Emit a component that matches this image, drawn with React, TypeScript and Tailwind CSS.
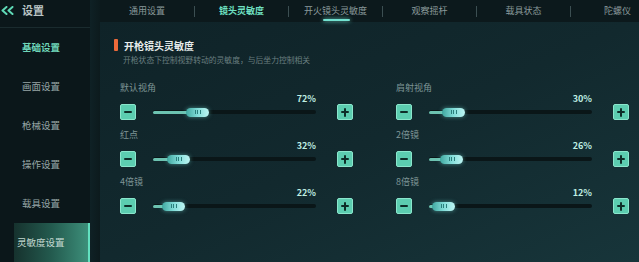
import type { CSSProperties } from "react";

const font: CSSProperties = {
  fontFamily: '"Noto Sans CJK SC", "Noto Sans", sans-serif',
};

const menu = ["基础设置", "画面设置", "枪械设置", "操作设置", "载具设置", "灵敏度设置"];
const tabs = ["通用设置", "镜头灵敏度", "开火镜头灵敏度", "观察摇杆", "载具状态", "陀螺仪"];

const sliders = [
  [
    { label: "默认视角", value: "72%", thumb: 33 },
    { label: "红点", value: "32%", thumb: 14 },
    { label: "4倍镜", value: "22%", thumb: 9 },
  ],
  [
    { label: "肩射视角", value: "30%", thumb: 13 },
    { label: "2倍镜", value: "26%", thumb: 11 },
    { label: "8倍镜", value: "12%", thumb: 3 },
  ],
];

function StepButton({ plus }: { plus?: boolean }) {
  return (
    <div className="relative grid h-4 w-4 shrink-0 place-items-center rounded-[2px] border border-[#8ae6cc] bg-[#5ccdb0]">
      <div className="absolute h-[2.5px] w-[8px] rounded-[1px] bg-[#0e2d28]" />
      {plus && <div className="absolute h-[9px] w-[2.5px] rounded-[1px] bg-[#0e2d28]" />}
    </div>
  );
}

function Slider({ label, value, thumb }: { label: string; value: string; thumb: number }) {
  return (
    <div className="flex w-[233px] flex-col">
      <div className="h-3 text-[9px] leading-3 text-[#7e9596]">{label}</div>
      <div className="h-[10px] w-[196px] text-right text-[9px] font-bold leading-[10px] text-[#bfeee2]">
        {value}
      </div>
      <div className="flex h-4 items-center">
        <StepButton />
        <div className="relative ml-[17px] flex h-[9px] w-[163px] items-center">
          <div className="h-[4px] w-full rounded-full bg-[#0a1618]" />
          <div
            className="absolute left-0 h-[3px] rounded-full bg-[#6cc2b0]"
            style={{ width: thumb + 4 }}
          />
          <div
            className="absolute top-0 flex h-[9px] w-[23px] items-center justify-center gap-[1.5px] rounded-full bg-gradient-to-r from-[#3ea8a0] via-[#80dcd8] to-[#bdf6f4] shadow-[0_0_4px_rgba(120,230,220,0.5)]"
            style={{ left: thumb }}
          >
            <div className="h-[4px] w-[1px] bg-[#2a7f7c]" />
            <div className="h-[4px] w-[1px] bg-[#2a7f7c]" />
            <div className="h-[4px] w-[1px] bg-[#2a7f7c]" />
          </div>
        </div>
        <div className="ml-[21px]">
          <StepButton plus />
        </div>
      </div>
    </div>
  );
}

export default function App() {
  return (
    <div className="flex h-[262px] w-[639px] overflow-hidden bg-[#0b171a]" style={font}>
      {/* Sidebar */}
      <aside className="flex w-[90px] shrink-0 flex-col bg-[#0b171a]">
        <div className="flex h-[28px] items-center gap-[8px] border-b border-[#1a2b2e] pl-[1px] pb-[6px]">
          <svg width="13" height="9" viewBox="0 0 13 9" fill="none" stroke="#5fd9b6" strokeWidth="2" strokeLinecap="round" strokeLinejoin="round">
            <path d="M5.5 1 L1.5 4.5 L5.5 8" />
            <path d="M11.5 1 L7.5 4.5 L11.5 8" />
          </svg>
          <span className="text-[11px] font-bold text-[#b9c4c4]">设置</span>
        </div>
        {menu.map((m, i) => {
          const active = i === menu.length - 1;
          return (
            <div
              key={m}
              className={
                active
                  ? "ml-[14px] flex h-[39px] items-center border-r-2 border-[#62e0c0] bg-gradient-to-r from-[#16322e] via-[#235a4e] to-[#3d8f7a] pl-[3px] text-[9.5px] text-[#c2d8d0]"
                  : "flex h-[39px] items-center pl-[22px] text-[9.5px] " +
                    (i === 0 ? "font-bold text-[#6fd6b8]" : "text-[#97a6a6]")
              }
            >
              {m}
            </div>
          );
        })}
      </aside>
      <div className="w-[10px] shrink-0 bg-gradient-to-r from-[#0f2125] to-[#0c1a1d]" />

      {/* Main */}
      <main className="flex flex-1 flex-col overflow-hidden">
        <div className="relative flex h-[22px] shrink-0 items-center bg-[#0c191c]">
          {tabs.map((t, i) => (
            <div key={t} className="flex h-full w-[94px] shrink-0 items-center">
              {i > 0 && <div className="h-[11px] w-px bg-[#3c4f52]" />}
              <div
                className={
                  "flex-1 text-center text-[9px] " +
                  (i === 1 ? "font-bold text-[#6fe0c2]" : "text-[#8a9a9b]")
                }
              >
                {t}
              </div>
            </div>
          ))}
          <div className="absolute bottom-[1px] left-[223px] h-[2px] w-[27px] rounded-full bg-[#72e2d0] shadow-[0_0_4px_#72e2d0]" />
        </div>

        <div className="flex flex-1 flex-col bg-gradient-to-br from-[#0f2328] via-[#12292e] to-[#17353a] pl-[14px] pt-[17px]">
          <div className="flex h-3 items-center gap-[6px]">
            <div className="h-[12px] w-[4px] rounded-[1px] bg-[#ee6a3a]" />
            <span className="text-[10px] font-bold text-[#e6eceb]">开枪镜头灵敏度</span>
          </div>
          <div className="mt-[4px] pl-[9px] text-[7.8px] leading-[10px] text-[#6a7f80]">
            开枪状态下控制视野转动的灵敏度，与后坐力控制相关
          </div>
          <div className="mt-[17px] flex gap-[43px] pl-[6px]">
            {sliders.map((col, c) => (
              <div key={c} className="flex flex-col gap-[9px]">
                {col.map((s) => (
                  <Slider key={s.label} {...s} />
                ))}
              </div>
            ))}
          </div>
        </div>
      </main>
    </div>
  );
}
